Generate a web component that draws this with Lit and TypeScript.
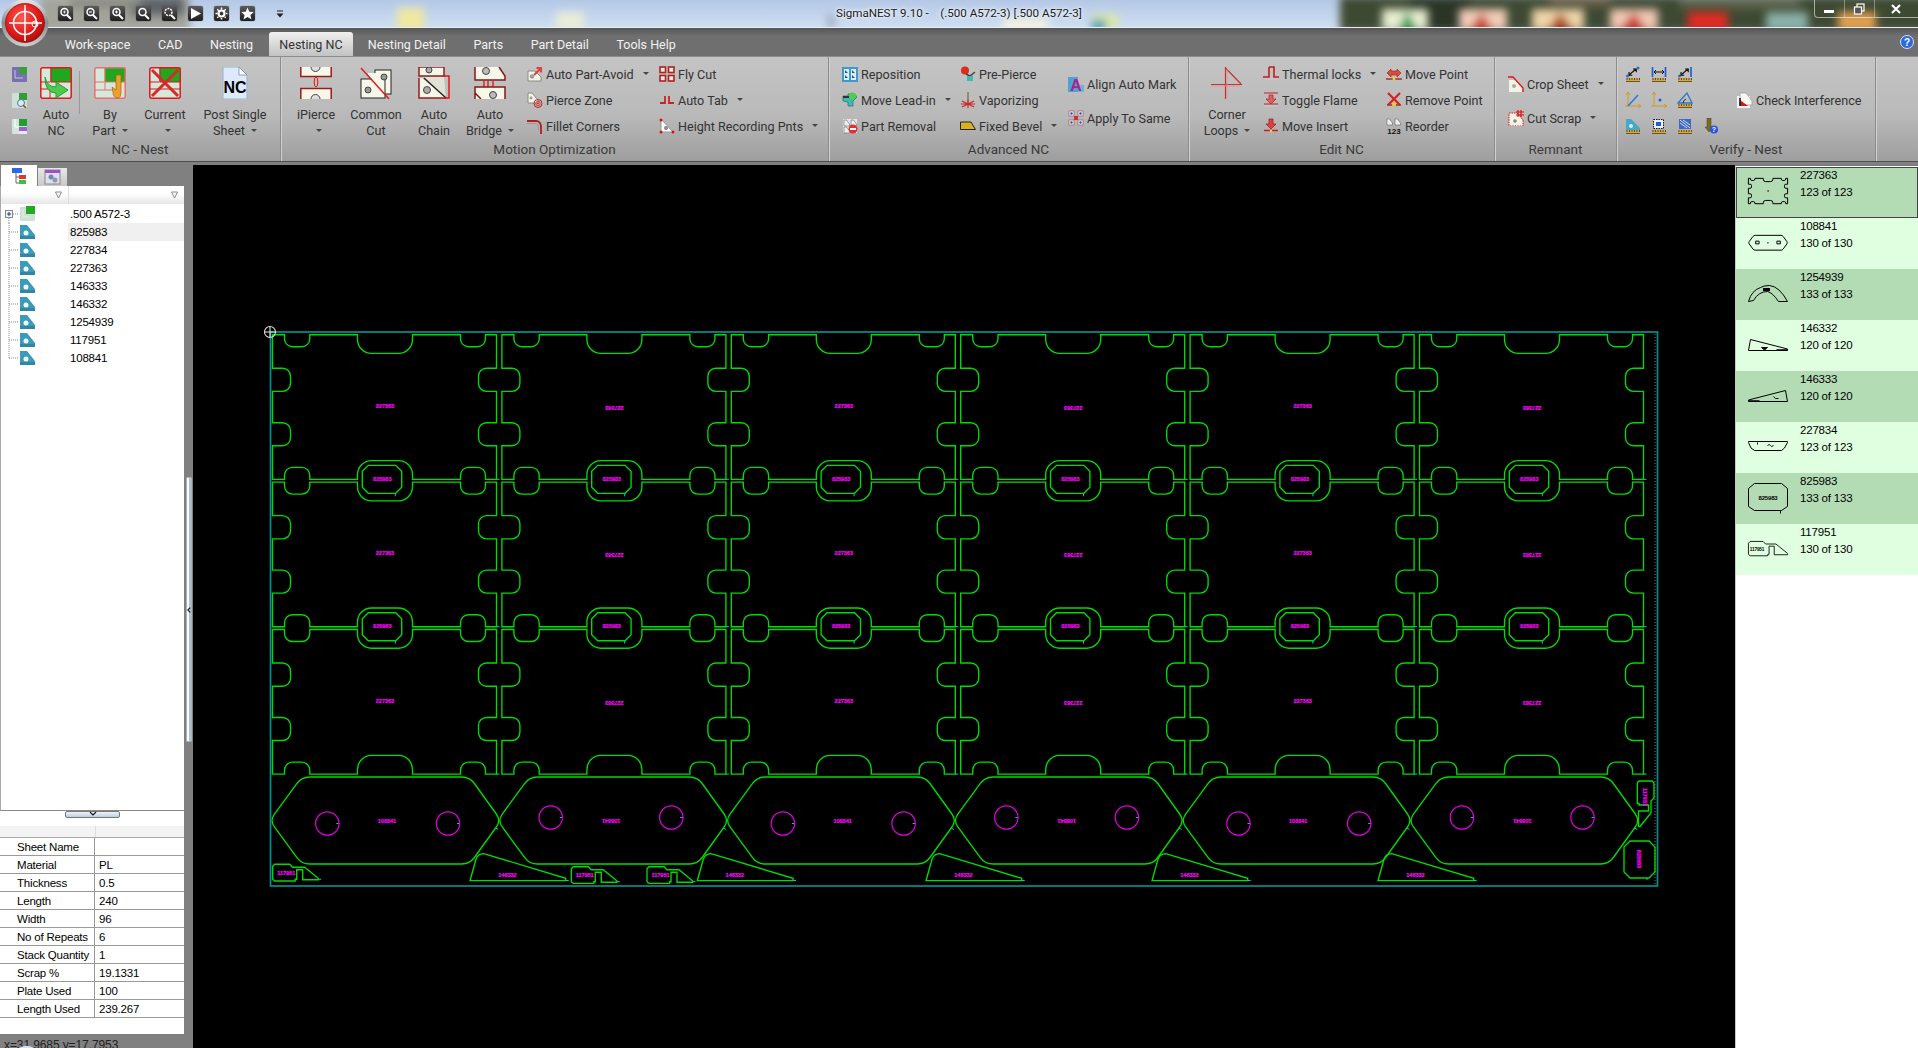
import { LitElement, html, svg, css } from "lit";
import { customElement } from "lit/decorators.js";

const plate = svg`<path d="M1 5H8L14 11V15H1Z" fill="#f4f4e6" stroke="#8a8a8a"/><circle cx="5" cy="10.5" r="1.8" fill="#aaa" stroke="#555" stroke-width=".5"/>`;
const ruler = svg`<rect x="1" y="12" width="14" height="4" fill="#d9a83a"/><path d="M2 12v2M4.5 12v2M7 12v2M9.5 12v2M12 12v2M14.5 12v2" stroke="#222" stroke-width=".7"/><path d="M1 15.6H15" stroke="#333" stroke-width=".8"/>`;
const tri = (x: number, y: number) => svg`<path d="M${x} ${y}h2.5l3 4v2h-5.500z" fill="#eee" stroke="#666" stroke-width=".6"/>`;

const small: Record<string, any> = {
  navA: svg`<rect x="1" y="1" width="15" height="15" rx="1" fill="#7a70b0"/><rect x="8" y="1" width="8" height="7" fill="#3aa03a"/><path d="M4 4V12H12" stroke="#c8c4e0" fill="none"/>`,
  navB: svg`<rect x="1" y="1" width="15" height="15" rx="1" fill="#cfe0d8"/><rect x="8" y="1" width="8" height="7" fill="#2fa02f"/><circle cx="10" cy="11" r="3.500" fill="#dfe8f5" stroke="#4a7ab0"/><path d="M12 13l3 3" stroke="#7a5a20" stroke-width="1.500"/>`,
  navC: svg`<rect x="1" y="1" width="15" height="15" rx="1" fill="#d4e6dc"/><rect x="8" y="1" width="8" height="7" fill="#1f9f2f"/><rect x="8" y="9" width="8" height="4" fill="#9a5fd0"/><rect x="8" y="13" width="8" height="3" fill="#e8e8f0"/><path d="M4 1V9H8" stroke="#fff" fill="none"/>`,
  avoid: svg`${plate}<path d="M7 9L13 3M9.500 2H14V6.500" stroke="#e04040" stroke-width="2" fill="none"/>`,
  pierce: svg`<path d="M1 1H5L11 8V11H1Z" fill="#f4f4e6" stroke="#8a8a8a"/><circle cx="4" cy="6" r="1.400" fill="#999"/><circle cx="11" cy="11.500" r="4" fill="none" stroke="#c02020"/><circle cx="11" cy="11.500" r="2.200" fill="none" stroke="#d04040"/><circle cx="11" cy="11.500" r=".8" fill="#b01818"/>`,
  fillet: svg`<path d="M0 3H10Q14 4 14 9V16" fill="none" stroke="#b02020" stroke-width="1.800"/><path d="M0 5.500H9Q11.500 6 11.500 9V12" fill="none" stroke="#999" stroke-width="1"/>`,
  fly: svg`<g fill="#efe9e0" stroke="#b02020" stroke-width="1.600"><rect x="1" y="1" width="5.500" height="5.500"/><rect x="9.500" y="1" width="5.500" height="5.500"/><rect x="1" y="9.500" width="5.500" height="5.500"/><rect x="9.500" y="9.500" width="5.500" height="5.500"/></g>`,
  tab: svg`<path d="M6 4V11H1M10 4V11H15" fill="none" stroke="#c02828" stroke-width="1.800"/>`,
  height: svg`<path d="M2 1L14 14H2Z" fill="#fafafa" stroke="#999"/><circle cx="7" cy="10" r="2" fill="#888"/><g fill="#e01010"><circle cx="2" cy="2" r="1.500"/><circle cx="2" cy="14" r="1.500"/><circle cx="14" cy="14" r="1.500"/></g>`,
  repo: svg`<rect x="0" y="1" width="16" height="15" fill="#3f9ac8"/><path d="M2 3H7V14H2ZM9 3H14V14H9Z" fill="#d8eef8"/><path d="M3 4l3 3H3ZM10 4l3 3h-3ZM3 9l3 3H3ZM10 9l3 3h-3Z" fill="#35506a"/>`,
  lead: svg`<path d="M1 4H6V2L11 1L15 5L11 9V14H6V10L1 9Z" fill="#3fbcb0" stroke="#2a6a6a" stroke-width=".7"/><path d="M7 1H13L15 4L11 7H8Z" fill="#4fd040"/><path d="M1 5H7" stroke="#333" stroke-width="2"/>`,
  removal: svg`<rect x="1" y="1" width="14" height="14" fill="#e8e8e8"/>${tri(2, 2)}${tri(9, 2)}${tri(2, 9)}<circle cx="11" cy="11" r="4.500" fill="#e03030"/><rect x="8" y="10" width="6" height="2" fill="#fff"/>`,
  prep: svg`<circle cx="5" cy="4.500" r="4" fill="#e02a1a"/><path d="M6 8L10 10L15 6" stroke="#444" stroke-width="1.500" fill="none"/><rect x="7" y="10" width="6" height="5" fill="#3fbcb0"/>`,
  vapor: svg`<path d="M8 0V10" stroke="#8a6a2a" stroke-width="1.300"/><path d="M2 9L14 15M14 9L2 15M8 8V16M1 12H15" stroke="#d02020" stroke-width="1.100"/>`,
  bevel: svg`<path d="M0.500 4H11L15.500 11.500H0.500Z" fill="#d8b020" stroke="#222"/>`,
  align: svg`<rect x="0" y="1" width="10" height="15" fill="#4ea4cc"/><rect x="10" y="9" width="6" height="7" fill="#6bb6d8"/><text x="8" y="15" text-anchor="middle" font-family="Liberation Sans" font-weight="700" font-size="16" fill="#b0208f">A</text>`,
  same: svg`<g fill="#f0f0f8" stroke="#aa5555" stroke-width=".7"><rect x="1" y="1" width="5" height="5"/><rect x="10" y="1" width="5" height="5"/><rect x="1" y="10" width="5" height="5"/><rect x="10" y="10" width="5" height="5"/></g><g fill="#2a50c0"><circle cx="3.500" cy="3.500" r="1.200"/><circle cx="12.500" cy="3.500" r="1.200"/><circle cx="3.500" cy="12.500" r="1.200"/><circle cx="12.500" cy="12.500" r="1.200"/></g><rect x="6" y="6" width="4" height="4" fill="#d03030"/>`,
  thermal: svg`<path d="M6 1V11H0M6 1H11V11H16" fill="none" stroke="#b82020" stroke-width="1.600"/><path d="M1 13H15" stroke="#c9c9c9"/>`,
  flame: svg`<path d="M1 1H15M1 12H15" stroke="#c02020"/><path d="M6 3H10V7H13L8 12L3 7H6Z" fill="#e06060" stroke="#b02020" stroke-width=".7"/><path d="M1 14H15" stroke="#ccc"/>`,
  insert: svg`<path d="M6 1H10V6H13L8 11L3 6H6Z" fill="#e04040" stroke="#a01818" stroke-width=".7"/><path d="M1 12.500H15" stroke="#c02020" stroke-width="1.500"/><circle cx="8" cy="13" r="1.300" fill="#f0d020"/>`,
  movep: svg`<path d="M1 7L5 3V5H11V3L15 7L11 11V9H5V11Z" fill="#e04838" stroke="#a01818" stroke-width=".6"/><path d="M0 13H16" stroke="#a03030" stroke-width="1.500"/><circle cx="8" cy="13" r="1.500" fill="#f0d020"/>`,
  removep: svg`<path d="M2 1L14 13M14 1L2 13" stroke="#d82020" stroke-width="2.200"/><path d="M1 13H15" stroke="#a03030" stroke-width="1.500"/><circle cx="8" cy="12.500" r="2" fill="#f0d020"/>`,
  reorder: svg`${tri(1, 1)}${tri(9, 1)}<text x="8" y="15.500" text-anchor="middle" font-family="Liberation Sans" font-weight="700" font-size="8" fill="#111">123</text>`,
  crop: svg`<path d="M1 4H8L14 12V16H1Z" fill="#f4f4e6"/><circle cx="6" cy="10" r="2" fill="#aaa"/><path d="M0 1H5L15 12V17" fill="none" stroke="#e01414" stroke-width="1.300"/>`,
  scrap: svg`<path d="M1 3H9L15 10V16H1Z" fill="#f4f4e6" stroke="#e01010" stroke-dasharray="1.500 1"/><circle cx="7" cy="11" r="1.800" fill="#888"/><path d="M10 0V7M13 0V7M8 2H16M8 5H16" stroke="#e01010" stroke-width="1.200"/>`,
  inter: svg`<rect x="0" y="4" width="13" height="12" fill="#f4f4f4"/><path d="M3 1H9L15 9V13H3Z" fill="#f8f8f0" stroke="#999" stroke-width=".7"/><path d="M3 8V14H11Z" fill="#d01818"/><path d="M3 6V14" stroke="#111" stroke-width="1.500"/>`,
  v1: svg`${ruler}<circle cx="2.500" cy="10" r="1.500" fill="#2a6ad0"/><circle cx="13" cy="2" r="1.500" fill="#2a6ad0"/><path d="M4 9L11 3M8 3h3.300v3.300M4 6v3.300h3.300" stroke="#111" stroke-width="1.100" fill="none"/>`,
  v2: svg`${ruler}<path d="M1.500 1V11M14.500 1V11" stroke="#1a5ad0" stroke-width="1.600"/><path d="M3 6H13M5 4L3 6L5 8M11 4L13 6L11 8" stroke="#111" fill="none"/>`,
  v3: svg`${ruler}<path d="M14 1V11" stroke="#1a5ad0" stroke-width="1.600"/><circle cx="2.500" cy="10" r="1.500" fill="#2a6ad0"/><path d="M4 9L11 3M8 3h3.300v3.300M4 6v3.300h3.300" stroke="#111" stroke-width="1.100" fill="none"/>`,
  v4: svg`<path d="M3 0V14H16M1 3L3 0L5 3M13 12L16 14L13 16M0 14H3" stroke="#cf9a28" fill="none"/><path d="M3 14L13 3" stroke="#2a7ad0" stroke-width="1.600"/>`,
  v5: svg`<path d="M3 0V14H16M1 3L3 0L5 3M13 12L16 14L13 16M0 14H3" stroke="#cf9a28" fill="none"/><circle cx="9" cy="8" r="1.500" fill="#1a5ad0"/>`,
  v6: svg`${ruler}<path d="M1 11L10 1L15 11Z" fill="none" stroke="#2a7ad0" stroke-width="1.300"/><path d="M6 11A5 5 0 0 1 9 7" stroke="#222" fill="none"/>`,
  v7: svg`${ruler}<path d="M1 1H6L15 10V12H1Z" fill="#47a8c4"/><circle cx="6" cy="8" r="2" fill="#d8eef4"/>`,
  v8: svg`${ruler}<rect x="2.500" y="1.500" width="10" height="9" fill="#e8f0f8" stroke="#111" stroke-dasharray="1.500 1"/><rect x="5" y="4" width="5" height="4" fill="#2a5ad0"/>`,
  v9: svg`${ruler}<rect x="2" y="1" width="12" height="10" fill="#3f6ac0"/><path d="M3 2L13 10M3 5L10 10M6 2L13 7" stroke="#cfdaf0"/>`,
  v10: svg`<path d="M4 0H8V9H10L6 14L2 9H4Z" fill="#7a6a20" stroke="#4a4010" stroke-width=".5"/><circle cx="11" cy="11.500" r="4" fill="#2a50e0"/><text x="11" y="14" text-anchor="middle" font-family="Liberation Sans" font-weight="700" font-size="7" fill="#fff">?</text>`,
};

const nestBase = (edge: string) => svg`<rect x=".8" y=".8" width="30.400" height="30.400" rx="2" fill="#d4e8dc" stroke="${edge}" stroke-width="1.500"/><path d="M1 15H10M11 1V15" stroke="${edge}" stroke-width="1"/><rect x="11" y="1" width="20" height="14" fill="#1fa81f" stroke="${edge}"/>`;
const large: Record<string, any> = {
  autonc: svg`${nestBase("#e01818")}<path d="M1 22H10V32M10 22H14" stroke="#e01818" fill="none"/><path d="M5 10Q7 20 16 20V15L28 23L16 31V26Q5 26 5 10Z" fill="#50c850" stroke="#2a9a3a"/>`,
  bypart: svg`${nestBase("#e87070")}<path d="M11 15V23H1M11 23H20" stroke="#e87070" fill="none"/><path d="M22 8H27V24Q27 31 24 31Q19 31 19 25L18 20L22 23Z" fill="#f0a028" stroke="#a86010" stroke-width=".7"/>`,
  current: svg`${nestBase("#e01818")}<path d="M1 22H32" stroke="#e01818"/><path d="M3 3L29 29M29 3L3 29" stroke="#d82828" stroke-width="3"/>`,
  post: svg`<path d="M4 0H20L28 8V32H4Z" fill="#dceafc" stroke="#9ab0d0"/><path d="M20 0V8H28Z" fill="#fff" stroke="#7a8ab0" stroke-width=".8"/><text x="16" y="26" text-anchor="middle" font-family="Liberation Sans" font-weight="700" font-size="16" fill="#000">NC</text>`,
  ipierce: svg`<path d="M1 0V9H31V0Z" fill="#f8f8ea"/><path d="M.8 0V9.500H31.200V0" fill="none" stroke="#9a1a1a" stroke-width="1.500"/><path d="M11 0A4.500 4.500 0 0 0 20 0" fill="#ddd" stroke="#444"/><path d="M1 32V22H31V32Z" fill="#f8f8ea"/><path d="M.8 32V21.500H31.200V32" fill="none" stroke="#9a1a1a" stroke-width="1.500"/><path d="M11 32A4.500 4.500 0 0 1 20 32" fill="#ddd" stroke="#444"/><ellipse cx="16" cy="15" rx="1.800" ry="5" fill="#f4b0a8" stroke="#c02020"/>`,
  common: svg`<rect x="15" y="3" width="16" height="24" fill="#f8f8ea" stroke="#222"/><rect x="1" y="12" width="24" height="19" fill="#f8f8ea" stroke="#222"/><path d="M8 8L22 23V6H8Z" fill="#f8f8ea"/><circle cx="24" cy="10" r="3" fill="#999" stroke="#444"/><circle cx="8" cy="23" r="3" fill="#999" stroke="#444"/><path d="M1 1L29 32" stroke="#e01c1c" stroke-width="1.500"/>`,
  chain: svg`<path d="M1 0V9H26V0Z" fill="#f8f8ea" stroke="#9a1a1a" stroke-width="1.500"/><path d="M1 11V31H28L4 11Z" fill="#f8f8ea"/><path d="M1 11V31H28" fill="none" stroke="#9a1a1a" stroke-width="1.500"/><path d="M5 10H26L28 31" fill="#f8f8ea" opacity=".6"/><path d="M6 11L28 31" stroke="#222" stroke-width="1.400"/><path d="M26 9H31V31H26" fill="none" stroke="#e01010" stroke-width="1.400"/><circle cx="11" cy="3" r="3" fill="#aaa" stroke="#444"/><circle cx="9" cy="23" r="3.500" fill="#aaa" stroke="#444"/>`,
  bridge: svg`<path d="M1 0V13H31V9L25 0Z" fill="#f8f8ea"/><path d="M1 0V13H31V9L25 0" fill="none" stroke="#8a1414" stroke-width="1.500"/><path d="M10 14V20M14 14V20M19 14V20" stroke="#e01010" stroke-width="1.300"/><path d="M1 32V20H31V32" fill="#f8f8ea"/><path d="M1 32V26L1 20H31V32M1 26L7 32" fill="none" stroke="#8a1414" stroke-width="1.500"/><circle cx="12" cy="4" r="3.500" fill="#bbb" stroke="#444"/><circle cx="19" cy="28" r="3.500" fill="#bbb" stroke="#444"/>`,
  loops: svg`<path d="M0 17.500H31M14.500 0V32M14.500 1L30 17" fill="none" stroke="#c83030" stroke-width="1.200"/><path d="M0 19H30M16 2V31" stroke="#e09090" stroke-width=".8"/>`,
};

const I = (k: string) => html`<svg class="si" viewBox="0 0 16 16" aria-hidden="true">${small[k]}</svg>`;
const L = (k: string) => html`<svg class="li" viewBox="0 0 32 32" aria-hidden="true">${large[k]}</svg>`;
const caret = html`<i class="caret"></i>`;

type Sm = [string, string, boolean?];
const lg = (k: string, a: string, b: string, c: boolean, w: number) =>
  html`<div class="lg" style="width:${w}px">${L(k)}<div class="lt">${a}</div><div class="lt">${b}${c ? caret : ""}</div></div>`;
const col = (items: Sm[], w: number, pad: number, two = false, ml = 0) =>
  html`<div class="col ${two ? "two" : ""}" style="width:${w}px;padding-left:${pad}px;margin-left:${ml}px">${items.map(
    ([k, t, c]) => html`<div class="it">${I(k)}<span class="txt">${t}</span>${c ? caret : ""}</div>`
  )}</div>`;

// ---------- canvas geometry ----------
const CX = 272.5, CY = 334.7, PW = 229.4, PH = 147.4, W = 224, H = 144.6;
function partPath(x: number, y: number) {
  const x1 = x + W, y1 = y + H;
  const top: [number, number, number, number][] = [[12, 37.3, 12, 8], [85, 140, 18.7, 14], [188, 213, 12, 8]];
  const side: [number, number][] = [[33.5, 56.7], [88, 111]];
  const d = 18, r = 8;
  let p = `M${x} ${y}`;
  for (const [a, b, dp, rr] of top)
    p += `H${x + a}V${y + dp - rr}A${rr} ${rr} 0 0 0 ${x + a + rr} ${y + dp}H${x + b - rr}A${rr} ${rr} 0 0 0 ${x + b} ${y + dp - rr}V${y}`;
  p += `H${x1}`;
  for (const [a, b] of side)
    p += `V${y + a}H${x1 - d + r}A${r} ${r} 0 0 0 ${x1 - d} ${y + a + r}V${y + b - r}A${r} ${r} 0 0 0 ${x1 - d + r} ${y + b}H${x1}`;
  p += `V${y1}`;
  for (const [a, b, dp, rr] of [...top].reverse())
    p += `H${x + b}V${y1 - dp + rr}A${rr} ${rr} 0 0 0 ${x + b - rr} ${y1 - dp}H${x + a + rr}A${rr} ${rr} 0 0 0 ${x + a} ${y1 - dp + rr}V${y1}`;
  p += `H${x}`;
  for (const [a, b] of [...side].reverse())
    p += `V${y + b}H${x + d - r}A${r} ${r} 0 0 0 ${x + d} ${y + b - r}V${y + a + r}A${r} ${r} 0 0 0 ${x + d - r} ${y + a}H${x}`;
  return p + "Z";
}
function octa(x: number, y: number, w: number, h: number, c: number) {
  return `M${x + c} ${y}H${x + w - c}L${x + w} ${y + c}V${y + h - c}L${x + w - c} ${y + h}H${x + c}L${x} ${y + h - c}V${y + c}Z`;
}
function hexPath(x: number, y: number) {
  const pts = [[-3, 43.5], [29, 0], [197, 0], [228.3, 43.5], [197, 87], [29, 87]];
  const n = pts.length, R = 8;
  let p = "";
  for (let i = 0; i < n; i++) {
    const [cx, cy] = pts[i], [ax, ay] = pts[(i + n - 1) % n], [bx, by] = pts[(i + 1) % n];
    const la = Math.hypot(ax - cx, ay - cy), lb = Math.hypot(bx - cx, by - cy);
    const sx = cx + ((ax - cx) / la) * R, sy = cy + ((ay - cy) / la) * R;
    const ex = cx + ((bx - cx) / lb) * R, ey = cy + ((by - cy) / lb) * R;
    p += `${i ? "L" : "M"}${x + sx} ${y + sy}Q${x + cx} ${y + cy} ${x + ex} ${y + ey}`;
  }
  return p + "Z";
}
const small117 = "M2 0H17L20 3H32L45.500 14V15.500H30V5.500H24V15H22.500V16.700H2L0 15V2Z";
const tri146 = "M0 27.400L6 6Q8 0 14.500 .5L95.700 25V27.400Z";

const mag = (t: string, x: number, y: number, rot = 0) =>
  svg`<text class="m" x="${x}" y="${y + 2}" text-anchor="middle" transform="${rot ? `rotate(${rot} ${x} ${y})` : ""}">${t}</text>`;

function sheetDrawing() {
  const out: any[] = [];
  const g: string[] = [];
  const lead: string[] = [];
  for (let c = 0; c < 6; c++) {
    for (let r = 0; r < 3; r++) {
      const x = CX + c * PW, y = CY + r * PH;
      g.push(partPath(x, y));
      lead.push(`M${x + W} ${y + H}h3`);
      const flip = c % 2 === 1;
      out.push(mag("227363", x + 112.5, y + (flip ? 73.3 : 71.3), flip ? 180 : 0));
      if (r < 2) {
        const ox = x + 89.8, oy = y + H - 14;
        g.push(octa(ox, oy, 39.4, 28, 6));
        lead.push(`M${ox + 33} ${oy + 28}v3`);
        out.push(mag("825983", ox + 20, oy + 13.5));
      }
    }
  }
  const hexY = 777;
  for (let i = 0; i < 6; i++) {
    const hx = 272.7 + i * 227.8;
    const odd = i % 2 === 0;
    g.push(hexPath(hx, hexY));
    lead.push(`M${hx + 223} ${hexY + 51}l2.500 1.500`);
    const cy = odd ? 823.5 : 817.5;
    const c1 = hx + (odd ? 54.6 : 50.2), c2 = hx + (odd ? 175.3 : 170.8);
    out.push(svg`<circle cx="${c1}" cy="${cy}" r="11.700" fill="none" stroke="#e000e0" stroke-width="1.200"/><circle cx="${c2}" cy="${cy}" r="11.700" fill="none" stroke="#e000e0" stroke-width="1.200"/>`);
    lead.push(`M${c1 + 9} ${cy}h3M${c2 + 9} ${cy}h3`);
    out.push(mag("108841", hx + (odd ? 114.3 : 110.6), hexY + 43.7, odd ? 0 : 180));
  }
  const smalls: [number, number][] = [[272.7, 864.3], [571.3, 866.7], [647, 866.7]];
  const shapes: any[] = [];
  for (const [x, y] of smalls) {
    shapes.push(svg`<path class="g" d="${small117}" transform="translate(${x} ${y})"/>`);
    lead.push(`M${x + 45.5} ${y + 15}h3`);
    out.push(mag("117951", x + 13.5, y + 8.5));
  }
  for (const x of [470, 697.3, 926, 1152, 1378]) {
    shapes.push(svg`<path class="g" d="${tri146}" transform="translate(${x} 853.300)"/>`);
    lead.push(`M${x + 95.7} 880.500h3`);
    out.push(mag("146332", x + 37.5, 875));
  }
  shapes.push(svg`<path class="g" d="${small117}" transform="translate(1654 781) rotate(90)"/>`);
  out.push(svg`<g transform="translate(1645 797) rotate(90)">${mag("117951", 0, 0)}</g>`);
  g.push(octa(1624, 841, 31, 37, 6));
  lead.push("M1647 878v2");
  out.push(svg`<g transform="translate(1639 859) rotate(90)">${mag("825983", 0, 0)}</g>`);
  return svg`
    <path d="M1655 334V884" stroke="#777" stroke-dasharray="1 2"/>
    <rect x="270.500" y="332" width="1387" height="554" fill="none" stroke="#008f8f" stroke-width="1.700"/>
    <path class="g" d="${g.join("")}"/>
    ${shapes}
    <path d="${lead.join("")}" stroke="#00c8d8" fill="none" stroke-width="1"/>
    ${out}
    <g fill="none" stroke="#e0e0e0" stroke-width="1.100"><circle cx="270" cy="332" r="5.500"/><path d="M264 332H276M270 326V338"/></g>`;
}

// ---------- thumbs ----------
const thumbs: Record<string, any> = {
  a: svg`<svg class="th" viewBox="-2 -2 228 149"><path d="${partPath(0, 0)}" vector-effect="non-scaling-stroke"/><path d="M108 72h10" vector-effect="non-scaling-stroke"/></svg>`,
  b: svg`<svg class="th" viewBox="-5 -2 235 91"><path d="${hexPath(0, 0)}" vector-effect="non-scaling-stroke"/><rect x="40" y="34" width="20" height="16" vector-effect="non-scaling-stroke"/><rect x="165" y="34" width="20" height="16" vector-effect="non-scaling-stroke"/><path d="M108 44h8" vector-effect="non-scaling-stroke"/></svg>`,
  c: svg`<svg class="th" viewBox="-.5 -.5 40 17"><path d="M0 16Q3 5 12 2Q15 0 21 0Q31 1 39 16H30Q24 7 19 6Q10 6 5 15Z"/><rect x="15" y="3" width="6" height="2" fill="#000"/></svg>`,
  d: svg`<svg class="th" viewBox="-.5 -.5 40 12"><path d="M2 0L39 9.500V11H0Z"/><path d="M13 8H19L16 10.500Z" fill="#000"/><path d="M28 10.500H39" stroke-width="1.500"/></svg>`,
  e: svg`<svg class="th" viewBox="-.5 -.5 40 12"><path d="M37 0L0 9.500V11H39Z"/><path d="M0 10.500H11" stroke-width="1.500"/><path d="M25 6l2 2h3"/></svg>`,
  f: svg`<svg class="th" viewBox="-.5 -.5 40 11"><path d="M0 0H39V1Q36 8 33 9H6Q2 8 0 1Z"/><path d="M9 1v2M19 4q2-2 3 0t3 0"/></svg>`,
  g: svg`<svg class="th" viewBox="-.5 -.5 40 30"><path d="M6 0H33L39 5V23L33 27H6L0 23V5Z"/><path d="M32 27v3"/><text x="19.500" y="16" text-anchor="middle" font-family="Liberation Sans" font-weight="700" font-size="6" fill="#000" stroke="none">825983</text></svg>`,
  h: svg`<svg class="th" viewBox="-.5 -.5 46.500 17.500"><path d="${small117}"/><text x="10" y="11" text-anchor="middle" font-family="Liberation Sans" font-weight="700" font-size="5.500" fill="#000" stroke="none">117951</text></svg>`,
};

const rightItems = [
  ["a", "227363", "123 of 123"], ["b", "108841", "130 of 130"], ["c", "1254939", "133 of 133"],
  ["d", "146332", "120 of 120"], ["e", "146333", "120 of 120"], ["f", "227834", "123 of 123"],
  ["g", "825983", "133 of 133"], ["h", "117951", "130 of 130"],
];
const treeItems = ["825983", "227834", "227363", "146333", "146332", "1254939", "117951", "108841"];
const props = [
  ["Sheet Name", ""], ["Material", "PL"], ["Thickness", "0.5"], ["Length", "240"], ["Width", "96"],
  ["No of Repeats", "6"], ["Stack Quantity", "1"], ["Scrap %", "19.1331"], ["Plate Used", "100"], ["Length Used", "239.267"],
];
const tabs = ["Work-space", "CAD", "Nesting", "Nesting NC", "Nesting Detail", "Parts", "Part Detail", "Tools Help"];

const qatGlyph = [
  svg`<circle cx="6.500" cy="6" r="3.500" fill="none" stroke="#fff" stroke-width="1.500"/><path d="M9 9L13 13" stroke="#fff" stroke-width="2"/><path d="M5 6h3M6.500 4.500v3" stroke="#fff" stroke-width=".7"/>`,
  svg`<circle cx="6.500" cy="6" r="3.500" fill="none" stroke="#fff" stroke-width="1.500"/><path d="M9 9L13 13" stroke="#fff" stroke-width="2"/><path d="M5 6h3" stroke="#fff"/>`,
  svg`<circle cx="6.500" cy="6" r="3.500" fill="none" stroke="#fff" stroke-width="1.500"/><path d="M9 9L13 13" stroke="#fff" stroke-width="2"/><path d="M5 6h3M6.500 4.500v3" stroke="#fff"/>`,
  svg`<circle cx="6.500" cy="6" r="3.500" fill="none" stroke="#fff" stroke-width="1.500"/><path d="M9 9L13 13" stroke="#fff" stroke-width="2"/>`,
  svg`<circle cx="6.500" cy="6" r="3.500" fill="none" stroke="#fff" stroke-width="1.500" stroke-dasharray="2 1"/><path d="M9 9L13 13" stroke="#fff" stroke-width="2"/>`,
  svg`<path d="M3 2L13 7.500L3 13Z" fill="#fff"/>`,
  svg`<circle cx="7.500" cy="7.500" r="3" fill="none" stroke="#fff" stroke-width="2.200"/><path d="M7.500 1.500v12M1.500 7.500h12M3.300 3.300l8.400 8.400M11.700 3.300l-8.400 8.400" stroke="#fff" stroke-width="1.500" stroke-dasharray="2 8.500"/>`,
  svg`<path d="M7.500 1.500L9.300 5.700L13.800 6L10.400 9L11.500 13.400L7.500 11L3.500 13.400L4.600 9L1.200 6L5.700 5.700Z" fill="#fff"/>`,
];

@customElement("app-root")
export class AppRoot extends LitElement {
  static styles = css`
    :host { display: block; position: relative; width: 1918px; height: 1048px; overflow: hidden; background: #808080; font-family: "Roboto", "Liberation Sans", sans-serif; }
    .title { position: relative; height: 27px; border-bottom: 1px solid #e8eef6; display: grid; grid-template-columns: 1fr auto 1fr; align-items: start; overflow: hidden; background: #bcd0ea; }
    .photo { position: absolute; left: 0; top: 0; width: 1918px; height: 28px; }
    .qat { position: relative; display: flex; gap: 11px; padding: 6px 0 0 58px; }
    .qb { width: 15px; height: 15px; border-radius: 2px; background: linear-gradient(#5a5a5a, #1e1e1e); box-shadow: 0 0 1px #222; display: block; }
    .qm { width: 10px; height: 10px; margin: 3px 0 0 9px; }
    .tt { position: relative; font-size: 11.600px; color: #1a1a1a; white-space: pre; padding-top: 6px; line-height: 15px; text-shadow: 0 0 6px #fff, 0 0 3px #fff; }
    .win { position: relative; justify-self: end; display: flex; width: 104px; height: 18px; border: 1px solid rgba(255,255,255,.55); border-top: 0; border-right: 0; border-bottom-left-radius: 4px; box-sizing: border-box; }
    .wb { flex: 1; display: flex; align-items: center; justify-content: center; border-right: 1px solid rgba(255,255,255,.35); }
    .wb:last-child { flex: 1.500; border-right: 0; }
    .logo { position: absolute; left: 1px; top: -1px; width: 48px; height: 48px; z-index: 3; }
    .tabs { height: 28px; background: linear-gradient(#565656, #707070 30%, #6e6e6e); display: flex; align-items: flex-end; padding-left: 51px; box-sizing: border-box; position: relative; }
    .tab { height: 24px; padding: 0 13.800px; line-height: 26px; font-size: 12.500px; color: #f2f2f2; white-space: nowrap; }
    .tab.on { margin: 0 1px 0 2px; padding: 0 10.500px; color: #333; background: linear-gradient(#f0f0f0, #c2c2c2); border-radius: 3px 3px 0 0; }
    .help { margin-left: auto; margin-right: 4px; align-self: center; width: 14px; height: 14px; }
    .ribbon { height: 106px; display: flex; background: linear-gradient(#c4c4c4, #bababa 55%, #9e9e9e); border-bottom: 1px solid #4e4e4e; border-top: 1px solid #8e8e8e; box-sizing: border-box; color: #333; font-size: 12.600px; }
    .grp { display: flex; flex-direction: column; box-sizing: border-box; border-right: 1px solid #8c8c8c; box-shadow: 1px 0 0 #d0d0d0; flex: none; }
    .gb { flex: 1; display: flex; min-height: 0; }
    .gl { height: 21px; line-height: 19px; text-align: center; font-size: 13.500px; color: #3a3a3a; }
    .lg { flex: none; display: flex; flex-direction: column; align-items: center; padding-top: 10px; box-sizing: border-box; }
    .li { width: 32px; height: 32px; display: block; margin-bottom: 8px; }
    .lt { line-height: 16px; height: 16px; white-space: nowrap; text-align: center; }
    .si { width: 16px; height: 16px; flex: none; display: block; }
    .col { flex: none; display: flex; flex-direction: column; padding-top: 4px; box-sizing: border-box; }
    .col.two { padding-top: 10px; }
    .it { height: 26px; display: flex; align-items: center; gap: 3px; white-space: nowrap; }
    .two .it { height: 34px; }
    .caret { display: inline-block; width: 0; height: 0; border: 3px solid transparent; border-top: 3px solid #444; border-bottom: 0; margin: 0 0 2px 6px; vertical-align: middle; }
    .sep { flex: none; width: 4px; margin: 14px 0 26px 0; border-right: 1px solid #999; box-sizing: border-box; }
    .vgrid { display: grid; grid-template-columns: repeat(4, 26px); grid-auto-rows: 26px; padding: 4px 0 0 8px; align-items: center; flex: none; }
    .mid { padding: 30px 0 0 8px; flex: none; }
    .main { display: flex; height: 886px; }
    .left { width: 193px; flex: none; display: flex; background: #808080; }
    .lc { width: 184px; flex: none; display: flex; flex-direction: column; }
    .ltabs { height: 24px; display: flex; align-items: flex-end; padding-left: 1px; gap: 1px; box-sizing: border-box; }
    .lt1, .lt2 { display: flex; align-items: center; justify-content: center; }
    .lt1 { width: 36px; height: 21px; background: #fff; }
    .lt2 { width: 29px; height: 18px; background: linear-gradient(#e8e8e8, #c8c8c8); }
    .tree { height: 625px; background: #fff; border-left: 1px solid #aaa; border-bottom: 1px solid #8a8a8a; box-sizing: border-box; font-size: 11.500px; color: #000; font-family: "Liberation Sans", sans-serif; letter-spacing: -.2px; }
    .th-row { height: 18px; display: grid; grid-template-columns: 67px 1fr; background: linear-gradient(#fff 40%, #e6e6e6); margin-bottom: 1px; }
    .th-c { display: flex; justify-content: flex-end; align-items: center; padding-right: 6px; }
    .th-c + .th-c { border-left: 1px solid #ddd; }
    .tr { height: 18px; display: grid; grid-template-columns: 67px 1fr; align-items: center; }
    .tr .n { padding-left: 2px; line-height: 18px; height: 18px; }
    .tr.hl .n { background: #f0f0f0; }
    .tsv { display: block; width: 36px; height: 18px; }
    .split { height: 15px; background: #fff; display: flex; justify-content: center; align-items: flex-start; position: relative; }
    .hd { width: 55px; height: 7px; box-sizing: border-box; border: 1px solid #777; border-radius: 2px; background: linear-gradient(#eef4f8, #b8d0e0); display: flex; justify-content: center; margin-left: 1px; }
    .pgrid { background: #fff; height: 208px; font-family: "Liberation Sans", sans-serif; font-size: 11.500px; letter-spacing: -.2px; color: #000; }
    .phead { height: 12px; background: #f3f3f3; display: grid; grid-template-columns: 95px 1fr; border-bottom: 1px solid #aaa; box-sizing: border-box; }
    .phead span + span { border-left: 1px solid #ddd; }
    .pr { height: 18px; display: grid; grid-template-columns: 95px 1fr; box-sizing: border-box; border-bottom: 1px solid #999; line-height: 18px; }
    .pr span:first-child { padding-left: 17px; border-right: 1px solid #999; }
    .pr span:last-child { padding-left: 4px; }
    .stat { height: 14px; overflow: hidden; font-family: "Liberation Sans", sans-serif; font-size: 12px; letter-spacing: -.1px; line-height: 16px; padding: 3px 0 0 4px; color: #222; position: relative; box-sizing: border-box; }
    .orb { position: absolute; left: 18px; top: 12px; width: 17px; height: 8px; border-radius: 50%; background: linear-gradient(#eaf4ff, #4a90d8); }
    .grip { width: 9px; flex: none; }
    .gh { width: 6px; height: 265px; margin: 315px 0 0 2px; box-sizing: border-box; border: 1px solid #b0b0b0; border-radius: 1px; background: linear-gradient(90deg, #fff 55%, #a8c4d4 55%); display: flex; align-items: center; justify-content: center; }
    .gh svg { width: 5px; height: 8px; display: block; }
    .canvas { flex: 1; background: #000; margin-top: 3px; min-width: 0; overflow: hidden; }
    .canvas > svg { display: block; width: 1542px; height: 883px; }
    .g { fill: none; stroke: #00dc00; stroke-width: 1.350; }
    .m { font: 700 5.500px "Liberation Sans", sans-serif; fill: #ff00ff; stroke: #ff00ff; stroke-width: .2px; }
    .right { width: 183px; flex: none; margin-top: 3px; background: #fff; box-sizing: border-box; border-left: 1px solid #c8c8c8; border-top: 1px solid #777; padding-top: 1px; font-family: "Liberation Sans", sans-serif; font-size: 11.500px; letter-spacing: -.2px; color: #000; }
    .ri { height: 51px; display: flex; align-items: center; box-sizing: border-box; padding-left: 12px; background: #e0ffe0; }
    .ri.alt { background: #b4dcb4; }
    .ri.sel { border: 1px solid #444; padding-left: 11px; }
    .thb { width: 40px; height: 30px; flex: none; display: flex; align-items: center; justify-content: center; margin-top: -2px; }
    .th { width: 40px; display: block; overflow: visible; fill: none; stroke: #000; stroke-width: 1; }
    .rt { margin-left: 12px; line-height: 17px; align-self: flex-start; }
    .sel .rt { margin-top: -1px; }
  `;

  private group(w: number, label: string, body: unknown) {
    return html`<section class="grp" style="width:${w}px"><div class="gb">${body}</div><div class="gl">${label}</div></section>`;
  }

  private logo() {
    return html`<svg class="logo" viewBox="0 0 48 48" aria-hidden="true">
      <defs><radialGradient id="lr" cx=".4" cy=".35" r=".75"><stop offset="0" stop-color="#ff5a50"/><stop offset=".6" stop-color="#e01818"/><stop offset="1" stop-color="#9a0c0c"/></radialGradient>
      <linearGradient id="lb" x1="0" y1="0" x2="0" y2="1"><stop offset="0" stop-color="#e8e8e8"/><stop offset=".5" stop-color="#8a8a8a"/><stop offset="1" stop-color="#d0d0d0"/></linearGradient></defs>
      <circle cx="24" cy="24" r="23.500" fill="url(#lb)"/><circle cx="24" cy="24" r="19.500" fill="url(#lr)" stroke="#700" stroke-width=".6"/>
      <g fill="none" stroke="#fff" stroke-width="1.500"><circle cx="24" cy="24" r="11.500"/><path d="M24 6V42M8 24H41"/></g>
      <circle cx="34" cy="25" r="3" fill="none" stroke="#fff"/>
    </svg>`;
  }

  private photo() {
    return html`<svg class="photo" viewBox="0 0 1918 28" preserveAspectRatio="none" aria-hidden="true">
      <defs><filter id="bl" x="-20%" y="-50%" width="140%" height="200%"><feGaussianBlur stdDeviation="4"/></filter>
      <linearGradient id="sky" x1="0" y1="0" x2="0" y2="1"><stop offset="0" stop-color="#b4c8e6"/><stop offset="1" stop-color="#cfdff2"/></linearGradient></defs>
      <rect width="1918" height="28" fill="url(#sky)"/>
      <g filter="url(#bl)">
        <rect x="40" y="-4" width="150" height="36" fill="#a4a49c"/>
        <rect x="130" y="-4" width="55" height="20" fill="#5f6468"/>
        <rect x="70" y="-4" width="70" height="12" fill="#8a8a80"/>
        <rect x="397" y="8" width="27" height="24" fill="#f0e8a0"/>
        <rect x="556" y="12" width="28" height="20" fill="#e8ecd8"/>
        <rect x="828" y="14" width="6" height="16" fill="#9aa6b8"/>
        <rect x="1003" y="19" width="45" height="12" fill="#f6f4e0"/>
        <rect x="1092" y="14" width="26" height="16" fill="#dce8a8"/>
        <rect x="1092" y="20" width="14" height="10" fill="#209ab0"/>
        <rect x="1340" y="-4" width="600" height="36" fill="#3e4a30"/>
        <rect x="1410" y="-4" width="60" height="36" fill="#2a3528"/>
        <rect x="1550" y="-4" width="60" height="10" fill="#6a6048"/>
        <rect x="1680" y="-4" width="120" height="12" fill="#5e6650"/>
      </g>
      <g filter="url(#bl)">
        <rect x="1382" y="9" width="46" height="22" fill="#e8eed0"/><path d="M1398 32L1407 10L1418 32Z" fill="#1f9a4a"/>
        <rect x="1459" y="9" width="48" height="22" fill="#f2ccb8"/><path d="M1468 32L1482 12L1494 32Z" fill="#c8402a"/>
        <rect x="1532" y="9" width="52" height="22" fill="#f0d4a8"/><path d="M1546 32L1560 12L1576 32Z" fill="#a84414"/>
        <rect x="1610" y="9" width="48" height="22" fill="#f2c8b4"/><path d="M1618 32L1634 12L1648 32Z" fill="#c83a2a"/>
        <rect x="1688" y="12" width="40" height="20" fill="#e02a22"/>
        <rect x="1766" y="12" width="42" height="20" fill="#8ab0a8"/>
        <rect x="1838" y="12" width="38" height="20" fill="#e0a050"/>
      </g>
    </svg>`;
  }

  render() {
    return html`
      <header class="title">
        ${this.photo()}
        <div class="qat">
          ${qatGlyph.map((g) => html`<svg class="qb" viewBox="0 0 15 15" aria-hidden="true">${g}</svg>`)}
          <svg class="qm" viewBox="0 0 10 10" aria-hidden="true"><path d="M2 2H8" stroke="#222"/><path d="M1.500 4.500H8.500L5 8.500Z" fill="#222"/></svg>
        </div>
        <div class="tt">SigmaNEST 9.10 -    (.500 A572-3) [.500 A572-3]</div>
        <div class="win">
          <div class="wb"><svg width="12" height="12" viewBox="0 0 12 12" aria-hidden="true"><rect x="1" y="7" width="10" height="3" fill="#fff"/></svg></div>
          <div class="wb"><svg width="12" height="12" viewBox="0 0 12 12" aria-hidden="true"><rect x="4" y="1" width="7" height="7" fill="none" stroke="#fff" stroke-width="1.200"/><rect x="1.500" y="4" width="7" height="7" fill="#555" stroke="#fff" stroke-width="1.200"/></svg></div>
          <div class="wb"><svg width="12" height="12" viewBox="0 0 12 12" aria-hidden="true"><path d="M2 2L10 10M10 2L2 10" stroke="#fff" stroke-width="2.200"/></svg></div>
        </div>
      </header>
      ${this.logo()}
      <nav class="tabs">
        ${tabs.map((t) => html`<div class="tab ${t === "Nesting NC" ? "on" : ""}">${t}</div>`)}
        <svg class="help" viewBox="0 0 14 14" aria-hidden="true"><circle cx="7" cy="7" r="6.500" fill="#2a6ad8" stroke="#cfe0ff"/><text x="7" y="10.500" text-anchor="middle" font-family="Liberation Sans" font-weight="700" font-size="10" fill="#fff">?</text></svg>
      </nav>
      <div class="ribbon">
        ${this.group(281, "NC - Nest", html`
          <div class="col" style="width:36px;padding-left:11px">${["navA", "navB", "navC"].map((k) => html`<div class="it">${I(k)}</div>`)}</div>
          ${lg("autonc", "Auto", "NC", false, 40)}
          <div class="sep"></div>
          ${lg("bypart", "By", "Part", true, 60)}
          ${lg("current", "Current", "", true, 50)}
          ${lg("post", "Post Single", "Sheet", true, 90)}
        `)}
        ${this.group(548, "Motion Optimization", html`
          ${lg("ipierce", "iPierce", "", true, 70)}
          ${lg("common", "Common", "Cut", false, 50)}
          ${lg("chain", "Auto", "Chain", false, 66)}
          ${lg("bridge", "Auto", "Bridge", true, 46)}
          ${col([["avoid", "Auto Part-Avoid", true], ["pierce", "Pierce Zone"], ["fillet", "Fillet Corners"]], 146, 14)}
          ${col([["fly", "Fly Cut"], ["tab", "Auto Tab", true], ["height", "Height Recording Pnts", true]], 170, 0)}
        `)}
        ${this.group(360, "Advanced NC", html`
          ${col([["repo", "Reposition"], ["lead", "Move Lead-in", true], ["removal", "Part Removal"]], 131, 13)}
          ${col([["prep", "Pre-Pierce"], ["vapor", "Vaporizing"], ["bevel", "Fixed Bevel", true]], 108, 0)}
          ${col([["align", "Align Auto Mark"], ["same", "Apply To Same"]], 120, 0, true)}
        `)}
        ${this.group(306, "Edit NC", html`
          ${lg("loops", "Corner", "Loops", true, 76)}
          ${col([["thermal", "Thermal locks", true], ["flame", "Toggle Flame"], ["insert", "Move Insert"]], 123, 0, false, -2)}
          ${col([["movep", "Move Point"], ["removep", "Remove Point"], ["reorder", "Reorder"]], 108, 0)}
        `)}
        ${this.group(122, "Remnant", html`
          ${col([["crop", "Crop Sheet", true], ["scrap", "Cut Scrap", true]], 120, 13, true)}
        `)}
        ${this.group(259, "Verify - Nest", html`
          <div class="vgrid">${["v1", "v2", "v3", "", "v4", "v5", "v6", "", "v7", "v8", "v9", "v10"].map((k) => (k ? I(k) : html`<span></span>`))}</div>
          <div class="mid it">${I("inter")}<span class="txt">Check Interference</span></div>
        `)}
      </div>
      <main class="main">
        <aside class="left">
          <div class="lc">
            <div class="ltabs">
              <div class="lt1"><svg width="16" height="18" viewBox="0 0 16 18" aria-hidden="true"><rect x="1" y="1" width="10" height="5" fill="#2a6ae0"/><path d="M5 6V16H9M5 10H9" stroke="#666" fill="none"/><rect x="8" y="8" width="7" height="4" fill="#e03a2a"/><rect x="8" y="13" width="7" height="4" fill="#40c040"/></svg></div>
              <div class="lt2"><svg width="17" height="16" viewBox="0 0 17 16" aria-hidden="true"><rect x="1" y="1" width="15" height="14" fill="#dfe0ea" stroke="#888"/><rect x="1" y="1" width="15" height="3" fill="#9a50d0"/><circle cx="7" cy="8" r="2.500" fill="#6a8ab0"/><circle cx="11" cy="11" r="2.500" fill="#8a9ab0"/></svg></div>
            </div>
            <div class="tree">
              <div class="th-row">
                <div class="th-c"><svg width="7" height="8" viewBox="0 0 7 8" aria-hidden="true"><path d="M.5 1H6.500L3.500 7Z" fill="none" stroke="#888"/></svg></div>
                <div class="th-c"><svg width="7" height="8" viewBox="0 0 7 8" aria-hidden="true"><path d="M.5 1H6.500L3.500 7Z" fill="none" stroke="#888"/></svg></div>
              </div>
              <div class="tr">
                <svg class="tsv" viewBox="0 0 36 18" aria-hidden="true">
                  <path d="M8 13V18M12 9H18" stroke="#888" stroke-dasharray="1 1"/>
                  <rect x="4.500" y="5.500" width="7" height="7" fill="#f4f4fa" stroke="#888"/><path d="M6 9H10M8 7V11" stroke="#1a3a90"/>
                  <rect x="19" y="2" width="15" height="14" rx="1" fill="#cfe0d4"/><rect x="25" y="1" width="9" height="8" fill="#22aa22"/><path d="M22 5V12H29" fill="none" stroke="#e8f0e8"/>
                </svg>
                <div class="n">.500 A572-3</div>
              </div>
              ${treeItems.map((t, i) => html`<div class="tr ${i === 0 ? "hl" : ""}">
                <svg class="tsv" viewBox="0 0 36 18" aria-hidden="true">
                  <path d="M8 0V${i === treeItems.length - 1 ? 9 : 18}M8 9H17" stroke="#888" stroke-dasharray="1 1" fill="none"/>
                  <path d="M19 2H26L34 12V16H19Z" fill="#3a9cb8"/><path d="M19 13H34V16H19Z" fill="#2a7a98" opacity=".6"/><circle cx="25" cy="10" r="2.500" fill="#f4fbff"/>
                </svg>
                <div class="n">${t}</div>
              </div>`)}
            </div>
            <div class="split"><div class="hd"><svg width="8" height="5" viewBox="0 0 8 5" aria-hidden="true"><path d="M1 0L4 3L7 0" fill="none" stroke="#111" stroke-width="1.200"/></svg></div></div>
            <div class="pgrid">
              <div class="phead"><span></span><span></span></div>
              ${props.map(([a, b]) => html`<div class="pr"><span>${a}</span><span>${b}</span></div>`)}
            </div>
            <div class="stat">x=31.9685 y=17.7953<div class="orb"></div></div>
          </div>
          <div class="grip"><div class="gh"><svg viewBox="0 0 5 8" aria-hidden="true"><path d="M4 1L1 4L4 7" fill="none" stroke="#000" stroke-width="1.300"/></svg></div></div>
        </aside>
        <div class="canvas"><svg viewBox="193 165 1542 883">${sheetDrawing()}</svg></div>
        <aside class="right">
          ${rightItems.map(([k, a, b], i) => html`<div class="ri ${i % 2 === 0 ? "alt" : ""} ${i === 0 ? "sel" : ""}">
            <div class="thb">${thumbs[k]}</div>
            <div class="rt"><div>${a}</div><div>${b}</div></div>
          </div>`)}
        </aside>
      </main>
    `;
  }
}
